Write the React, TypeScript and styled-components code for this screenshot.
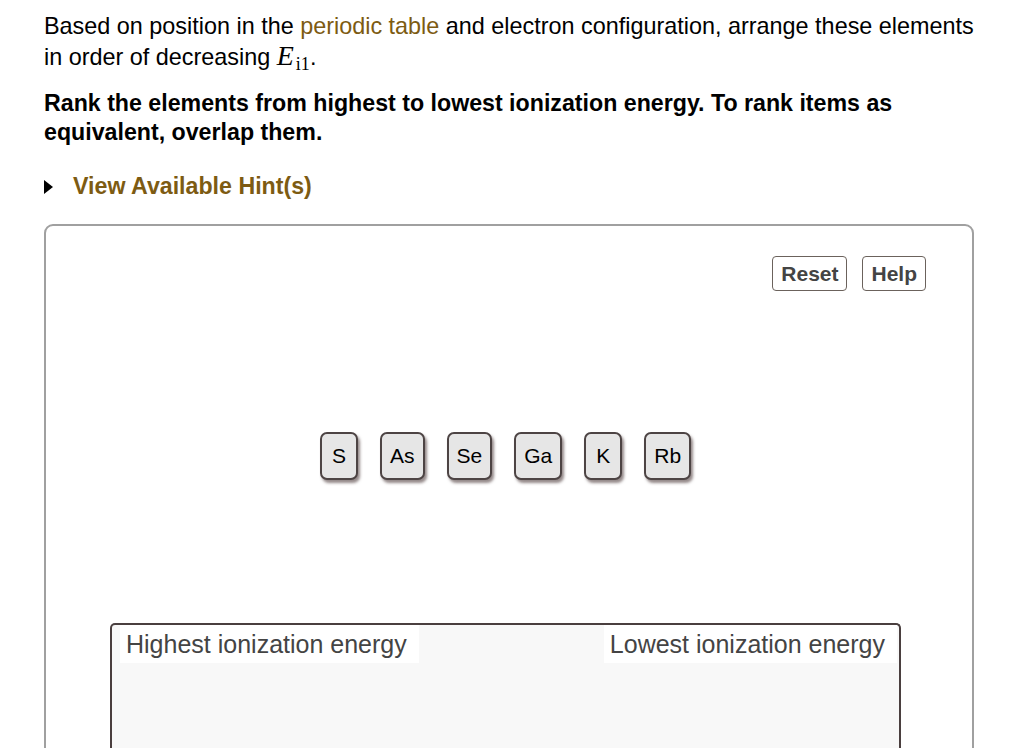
import React from 'react';
import styled, { createGlobalStyle } from 'styled-components';

const GlobalStyle = createGlobalStyle`
  html, body {
    margin: 0;
    padding: 0;
    background: #ffffff;
  }
  body {
    font-family: "Liberation Sans", Arial, Helvetica, sans-serif;
    color: #000;
  }
`;

const elements = ['S', 'As', 'Se', 'Ga', 'K', 'Rb'];

const App = () => {
  return (
    <>
      <GlobalStyle />
      <Page>
        <Intro>
          Based on position in the <Term>periodic table</Term> and electron configuration, arrange these elements in
          order of decreasing{' '}
          <MathVar>
            E<Sub>i1</Sub>
          </MathVar>
          .
        </Intro>
        <Instruction>Rank the elements from highest to lowest ionization energy. To rank items as equivalent, overlap them.</Instruction>
        <HintRow>
          <Triangle />
          <HintLabel>View Available Hint(s)</HintLabel>
        </HintRow>
        <Board>
          <Toolbar>
            <ToolButton>Reset</ToolButton>
            <ToolButton>Help</ToolButton>
          </Toolbar>
          <TileRow>
            {elements.map(el => (
              <Tile key={el}>{el}</Tile>
            ))}
          </TileRow>
          <DropZone>
            <ZoneHeader>
              <ZoneLabel>Highest ionization energy</ZoneLabel>
              <ZoneLabel>Lowest ionization energy</ZoneLabel>
            </ZoneHeader>
          </DropZone>
        </Board>
      </Page>
    </>
  );
};

const Page = styled.div`
  padding: 12px 40px 0 44px;
  height: 748px;
  box-sizing: border-box;
  overflow: hidden;
`;

const Intro = styled.p`
  margin: 0;
  font-size: 23.4px;
  line-height: 29px;
  max-width: 935px;
`;

const Term = styled.span`
  color: #7d5b12;
`;

const MathVar = styled.span`
  display: inline-block;
  font-family: "Liberation Serif", "Times New Roman", serif;
  font-style: italic;
  font-size: 28px;
  line-height: 29px;
`;

const Sub = styled.span`
  display: inline-block;
  font-style: normal;
  font-size: 18px;
  margin-left: 2px;
  transform: translateY(5px);
`;

const Instruction = styled.p`
  margin: 15px 0 0;
  font-size: 23.2px;
  line-height: 29px;
  font-weight: bold;
  max-width: 880px;
`;

const HintRow = styled.div`
  display: flex;
  align-items: center;
  gap: 20px;
  margin-top: 26px;
`;

const Triangle = styled.span`
  width: 0;
  height: 0;
  border-top: 7px solid transparent;
  border-bottom: 7px solid transparent;
  border-left: 9px solid #000;
`;

const HintLabel = styled.span`
  font-size: 23.2px;
  font-weight: bold;
  color: #7d5b12;
`;

const Board = styled.div`
  margin-top: 24px;
  width: 930px;
  border: 2px solid #a0a0a0;
  border-radius: 9px;
  height: 560px;
  box-sizing: border-box;
  display: flex;
  flex-direction: column;
`;

const Toolbar = styled.div`
  display: flex;
  justify-content: flex-end;
  gap: 15px;
  padding: 30px 46px 0 0;
`;

const ToolButton = styled.button`
  font-family: "Liberation Sans", Arial, sans-serif;
  font-size: 21px;
  font-weight: bold;
  color: #444;
  background: #fff;
  border: 1.5px solid #6b625c;
  border-radius: 4px;
  height: 35px;
  padding: 0 8px;
  line-height: 1;
`;

const TileRow = styled.div`
  display: flex;
  justify-content: flex-start;
  gap: 22px;
  padding-left: 274px;
  margin-top: 141px;
`;

const Tile = styled.div`
  min-width: 18px;
  height: 44px;
  padding: 0 8px;
  display: flex;
  align-items: center;
  justify-content: center;
  font-size: 21px;
  background: #e6e6e6;
  border: 2px solid #4d4444;
  border-radius: 7px;
  box-shadow: 2px 3px 3px rgba(60, 40, 40, 0.55);
`;

const DropZone = styled.div`
  margin: 143px 71px 0 64px;
  flex: 1;
  background: #f8f8f8;
  border: 2px solid #4a3f3f;
  border-bottom: none;
  border-radius: 5px 5px 0 0;
`;

const ZoneHeader = styled.div`
  display: flex;
  justify-content: space-between;
  padding: 0 2px 0 8px;
`;

const ZoneLabel = styled.div`
  background: #fff;
  color: #444;
  font-size: 25px;
  line-height: 38px;
  padding: 0 12px 0 6px;
`;

export default App;
